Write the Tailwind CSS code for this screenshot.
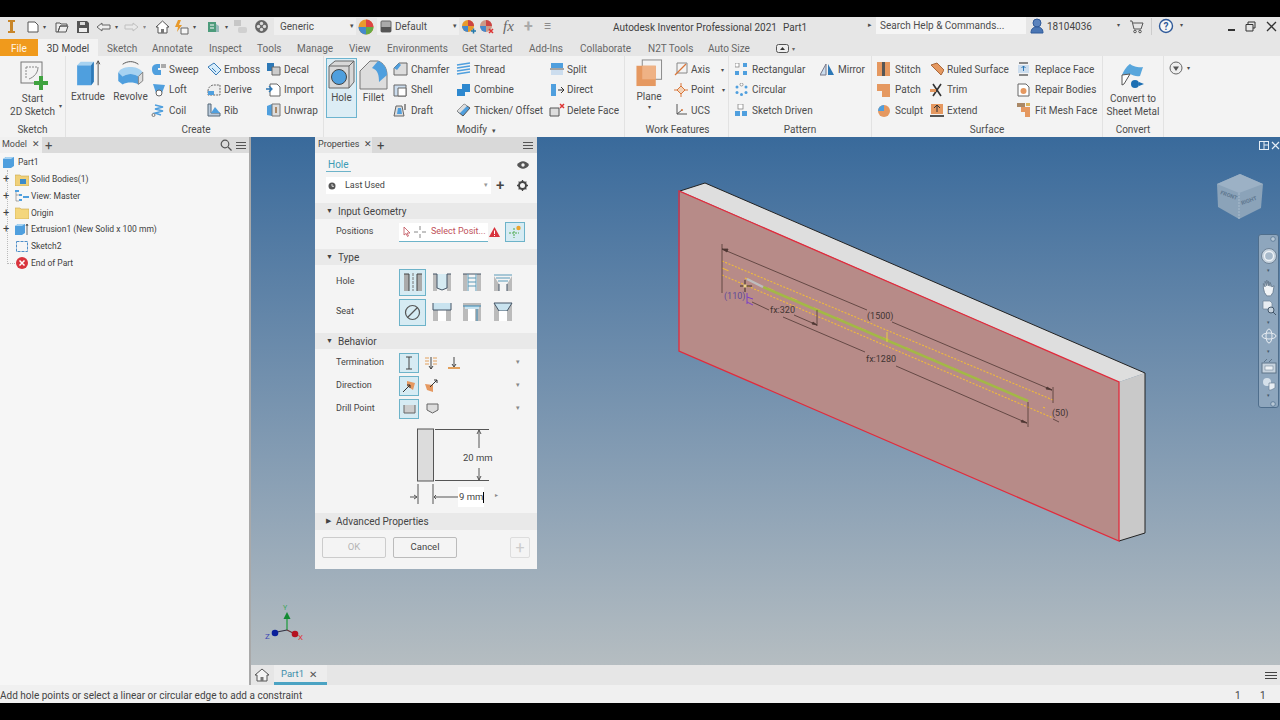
<!DOCTYPE html>
<html lang="en">
<head>
<meta charset="UTF-8">
<title>Autodesk Inventor Professional 2021</title>
<script src="https://cdn.jsdelivr.net/npm/@tailwindcss/browser@4"></script>
</head>
<body class="bg-black">
<div class="w-[1280px] h-[720px] overflow-hidden flex flex-col bg-black font-['Roboto',sans-serif] text-[10px] text-[#4d4d4d]">
  <div class="h-[17px] shrink-0 bg-black"></div>

  <!-- title bar -->
  <div class="h-[22px] shrink-0 bg-[#e6e6e6] flex items-center relative pb-[3px]">
    <div class="w-[26px] pl-[7px]"><svg width="9" height="15" viewBox="0 0 9 15"><path d="M1 1h7v2H6v9h2v2H1v-2h2V3H1z" fill="#c8862a"/></svg></div>
    <svg class="w-[14px] h-[14px]" viewBox="0 0 14 14"><path d="M2 2h7l3 3v7H2z" fill="#fff" stroke="#555"/></svg>
    <span class="w-[11px] text-[6px] pl-[3px]">▾</span>
    <svg class="w-[16px] h-[14px] ml-[3px]" viewBox="0 0 16 14"><path d="M2 3h4l1 1h6v2H6L4 12H2zM4 12l2-6h8l-2 6z" fill="#eee" stroke="#555"/></svg>
    <svg class="w-[14px] h-[14px] ml-[6px]" viewBox="0 0 14 14"><path d="M1 1h10l2 2v10H1z" fill="#555"/><path d="M4 2h5v3H4z" fill="#ddd"/><path d="M3 8h8v4H3z" fill="#eee"/></svg>
    <svg class="w-[15px] h-[12px] ml-[6px]" viewBox="0 0 15 12"><path d="M1 6l5-4v2h8v4H6v2z" fill="#eee" stroke="#666"/></svg>
    <span class="w-[10px] text-[6px] pl-[4px]">▾</span>
    <svg class="w-[15px] h-[12px] ml-[3px] opacity-40" viewBox="0 0 15 12"><path d="M14 6L9 2v2H1v4h8v2z" fill="#eee" stroke="#888"/></svg>
    <span class="w-[10px] text-[6px] pl-[4px] opacity-60">▾</span>
    <svg class="w-[15px] h-[15px] ml-[6px]" viewBox="0 0 15 15"><path d="M1 8l6.500-6L14 8h-2v6H3V8z" fill="#fff" stroke="#555"/><path d="M6 10h3v4H6z" fill="#777"/></svg>
    <svg class="w-[16px] h-[16px] ml-[3px]" viewBox="0 0 16 16"><path d="M5 1L2 8h3l-1 5 5-7H6l2-5z" fill="#e89a2c"/><path d="M8 9h7v6H8z" fill="#f6f6f6" stroke="#666"/></svg>
    <span class="w-[10px] text-[6px] pl-[4px]">▾</span>
    <svg class="w-[15px] h-[15px] ml-[7px]" viewBox="0 0 15 15"><path d="M2 3h8v10H2z" fill="#4d9c7c"/><path d="M10 5l3 2v6h-3z" fill="#9bb"/><path d="M4 6h4M4 9h4" stroke="#fff"/></svg>
    <span class="w-[10px] text-[6px] pl-[4px]">▾</span>
    <svg class="w-[15px] h-[15px] ml-[2px] opacity-50" viewBox="0 0 15 15"><rect x="1" y="1" width="7" height="6" fill="#aaa"/><rect x="5" y="8" width="9" height="6" rx="2" fill="#bbb"/></svg>
    <svg class="w-[15px] h-[15px] ml-[6px]" viewBox="0 0 15 15"><circle cx="7.500" cy="7.500" r="6.500" fill="#666"/><circle cx="7.500" cy="4.500" r="1.700" fill="#ddd"/><circle cx="7.500" cy="10.500" r="1.700" fill="#ddd"/><circle cx="4.500" cy="7.500" r="1.700" fill="#ddd"/><circle cx="10.500" cy="7.500" r="1.700" fill="#ddd"/></svg>
    <div class="w-[82px] h-[17px] ml-[5px] bg-[#efefef] flex items-center justify-between pl-[6px] pr-[2px]"><span>Generic</span><span class="text-[7px]">▾</span></div>
    <svg class="w-[16px] h-[16px] ml-[2px]" viewBox="0 0 16 16"><circle cx="8" cy="8" r="7.500" fill="#e89a2c"/><path d="M8 8V.5A7.500 7.500 0 0 1 15.500 8z" fill="#d44"/><path d="M8 8h7.500A7.500 7.500 0 0 1 8 15.500z" fill="#6a4"/><path d="M8 8v7.500A7.500 7.500 0 0 1 .5 8z" fill="#48c"/></svg>
    <div class="w-[82px] h-[17px] ml-[3px] bg-[#efefef] flex items-center justify-between pl-[3px] pr-[2px]"><span class="flex items-center gap-[3px]"><svg width="12" height="13" viewBox="0 0 12 13"><rect x="1" y="1" width="10" height="11" rx="1" fill="#aaa" stroke="#666"/><rect x="1" y="7" width="10" height="5" fill="#555"/></svg>Default</span><span class="text-[7px]">▾</span></div>
    <svg class="w-[15px] h-[15px] ml-[2px]" viewBox="0 0 15 15"><circle cx="7" cy="7" r="6" fill="#e89a2c"/><path d="M7 7V1a6 6 0 0 1 6 6z" fill="#c44"/><path d="M7 7v6a6 6 0 0 1-6-6z" fill="#48c"/><path d="M10 12h5M12.500 9.500v5" stroke="#27a" stroke-width="1.500"/></svg>
    <svg class="w-[15px] h-[15px] ml-[3px]" viewBox="0 0 15 15"><circle cx="7" cy="7" r="6" fill="#c98"/><path d="M7 7V1a6 6 0 0 1 6 6z" fill="#c44"/><path d="M7 7v6a6 6 0 0 1-6-6z" fill="#48c"/><path d="M10 10l4 4M14 10l-4 4" stroke="#d33" stroke-width="1.500"/></svg>
    <span class="ml-[9px] w-[17px] font-['Liberation_Serif',serif] italic text-[15px] text-[#666] leading-none">fx</span>
    <span class="ml-[4px] w-[14px] text-[#aaa] text-[16px] font-bold leading-none">+</span>
    <span class="ml-[6px] text-[8px] text-[#777]">☰</span>
    <span class="absolute left-[613px] top-[3px] text-[#3f3f3f]">Autodesk Inventor Professional 2021</span>
    <span class="absolute left-[783px] top-[3px] text-[#3f3f3f]">Part1</span>
    <span class="absolute left-[868px] top-[3px] text-[7px]">▸</span>
    <div class="absolute left-[876px] top-0 w-[150px] h-[17px] bg-[#f5f5f5] flex items-center pl-[4px]">Search Help &amp; Commands...</div>
    <svg class="absolute left-[1030px] top-[1px]" width="14" height="16" viewBox="0 0 14 16"><circle cx="7" cy="5" r="4" fill="#5b83bd" stroke="#2f5a9a"/><path d="M1 15c0-5 3-6 6-6s6 1 6 6z" fill="#4a76b4" stroke="#2f5a9a"/></svg>
    <span class="absolute left-[1047px] top-[2px] text-[#444]">18104036</span>
    <span class="absolute left-[1117px] top-[3px] text-[6px]">▾</span>
    <svg class="absolute left-[1129px] top-[2px]" width="15" height="15" viewBox="0 0 15 15" fill="none" stroke="#555"><path d="M1 2h2l2 8h7l2-6H4"/><circle cx="6" cy="12.500" r="1.300"/><circle cx="11" cy="12.500" r="1.300"/></svg>
    <div class="absolute left-[1151px] top-[1px] w-[1px] h-[17px] bg-[#ccc]"></div>
    <svg class="absolute left-[1158px] top-[1px]" width="16" height="16" viewBox="0 0 16 16"><circle cx="8" cy="8" r="6.500" fill="#f6f6f6" stroke="#2f5a9a" stroke-width="1.400"/><text x="8" y="11.500" text-anchor="middle" font-size="10" font-weight="700" fill="#2f5a9a" font-family="Roboto">?</text></svg>
    <span class="absolute left-[1180px] top-[3px] text-[6px]">▾</span>
    <div class="absolute left-[1228px] top-[12px] w-[7px] h-[2px] bg-[#333]"></div>
    <svg class="absolute left-[1245px] top-[4px]" width="11" height="11" viewBox="0 0 11 11" fill="none" stroke="#333"><path d="M3 3V1h7v6H8"/><path d="M1 3.500h7v6.500H1z"/></svg>
    <svg class="absolute left-[1266px] top-[4px]" width="11" height="11" viewBox="0 0 11 11" stroke="#333" stroke-width="1.300"><path d="M1 1l9 9M10 1l-9 9"/></svg>
  </div>

  <!-- ribbon tabs -->
  <div class="h-[17px] shrink-0 bg-[#e6e6e6] flex items-center text-[#666]">
    <div class="w-[38px] h-full bg-[#f09a1c] text-white/90 pl-[11px] pt-[2px] flex items-center">File</div>
    <div class="w-[60px] h-full bg-[#f3f3f3] text-[#444] pt-[2px] flex items-center justify-center">3D Model</div>
    <div class="h-full flex items-center pt-[2px]">
      <span class="ml-[9px] w-[45px]">Sketch</span>
      <span class="w-[57px]">Annotate</span>
      <span class="w-[48px]">Inspect</span>
      <span class="w-[40px]">Tools</span>
      <span class="w-[52px]">Manage</span>
      <span class="w-[38px]">View</span>
      <span class="w-[75px]">Environments</span>
      <span class="w-[67px]">Get Started</span>
      <span class="w-[51px]">Add-Ins</span>
      <span class="w-[68px]">Collaborate</span>
      <span class="w-[60px]">N2T Tools</span>
      <span class="w-[68px]">Auto Size</span>
      <svg width="13" height="9" viewBox="0 0 13 9"><rect x=".5" y=".5" width="12" height="8" rx="2" fill="#eee" stroke="#555"/><path d="M4 6l2.500-3L9 6z" fill="#333"/></svg>
      <span class="ml-[3px] text-[6px]">▾</span>
    </div>
  </div>

  <!-- ribbon -->
  <div class="h-[81px] shrink-0 bg-[#f3f3f3] flex">
    <!-- Sketch -->
    <div class="w-[66px] flex flex-col border-r border-[#e2e2e2]">
      <div class="h-[66px] flex flex-col items-center pt-[3px] relative">
        <svg width="32" height="32" viewBox="0 0 32 32" class="ml-[2px]"><rect x="3" y="3" width="21" height="21" fill="#f3f3f3" stroke="#777"/><path d="M8 8v11M8 8h12" stroke="#888" stroke-dasharray="2 1"/><path d="M20 8c0 6-4 10-9 12" stroke="#888" fill="none"/><path d="M21 17h4v5h5v4h-5v5h-4v-5h-5v-4h5z" fill="#3fa33f"/></svg>
        <span class="leading-[13px] mt-[1px]">Start</span>
        <span class="leading-[13px]">2D Sketch</span>
        <span class="absolute right-[3px] top-[45px] text-[6px]">▾</span>
      </div>
      <div class="text-center pt-[1px]">Sketch</div>
    </div>
    <!-- Create -->
    <div class="w-[258px] flex flex-col border-r border-[#e2e2e2]">
      <div class="h-[66px] flex pt-[3px]">
        <div class="w-[44px] flex flex-col items-center">
          <svg width="27" height="28" viewBox="0 0 30 32"><path d="M2 7h16l3-4v23l-3 4H2z" fill="#4f9fde"/><path d="M2 7h16l3-4H6z" fill="#a6d2f1"/><path d="M18 7l3-4v23l-3 4z" fill="#2d78b6"/><path d="M26 30V3M24 6l2-4 2 4" stroke="#444" fill="none"/></svg>
          <span class="mt-[2px]">Extrude</span>
        </div>
        <div class="w-[41px] flex flex-col items-center">
          <svg width="27" height="28" viewBox="0 0 30 32"><path d="M1 15c3-5 9-6 14-6s10 1 14 6l-5 5c-5-4-13-4-18 0z" fill="#a6d2f1"/><path d="M1 15l5 5v9l-5-4zM6 20c5-4 13-4 18 0v9c-5-3-13-3-18 0z" fill="#4f9fde"/><path d="M24 20l5-5v10l-5 4z" fill="#ddd" stroke="#777"/><path d="M6 6c6-4 12-4 18 0" stroke="#444" fill="none"/></svg>
          <span class="mt-[2px]">Revolve</span>
        </div>
        <div class="w-[55px] flex flex-col gap-[6.500px] pt-[3px]">
          <div class="flex items-center gap-[2px] h-[14px]"><svg width="16" height="14" viewBox="0 0 16 14"><path d="M1 7c0-4 3-5 6-5h2v4H7v2h3v5H5C3 13 1 11 1 7z" fill="#4f9fde"/><path d="M10 2h5v4h-5z" fill="#aaa"/></svg>Sweep</div>
          <div class="flex items-center gap-[2px] h-[14px]"><svg width="16" height="14" viewBox="0 0 16 14"><path d="M2 1l12 1-3 8a4 4 0 0 1-6 0z" fill="#4f9fde"/><circle cx="8" cy="10" r="3" fill="#fff" stroke="#666"/></svg>Loft</div>
          <div class="flex items-center gap-[2px] h-[14px]"><svg width="16" height="14" viewBox="0 0 16 14" fill="none" stroke="#4f9fde" stroke-width="1.500"><path d="M4 2l8 2-8 2 8 2-8 2 6 2"/><circle cx="2.500" cy="12" r="1.500" stroke="#777" stroke-width="1"/></svg>Coil</div>
        </div>
        <div class="w-[60px] flex flex-col gap-[6.500px] pt-[3px]">
          <div class="flex items-center gap-[2px] h-[14px]"><svg width="16" height="14" viewBox="0 0 16 14"><path d="M2 5l6-4 7 7-5 5z" fill="#d6ecfa" stroke="#3a7cb8"/><path d="M6 6l4 4" stroke="#3a7cb8"/></svg>Emboss</div>
          <div class="flex items-center gap-[2px] h-[14px]"><svg width="16" height="14" viewBox="0 0 16 14"><path d="M2 8a6 6 0 0 1 6-6h6v10H2z" fill="#eee" stroke="#666" stroke-dasharray="2 1"/><path d="M2 8h6v4H2z" fill="#4f9fde"/></svg>Derive</div>
          <div class="flex items-center gap-[2px] h-[14px]"><svg width="16" height="14" viewBox="0 0 16 14"><path d="M2 1h3v9h9v3H2z" fill="#bcd" stroke="#567"/><path d="M5 10l4-6 5 6z" fill="#4f9fde"/></svg>Rib</div>
        </div>
        <div class="flex flex-col gap-[6.500px] pt-[3px]">
          <div class="flex items-center gap-[3px] h-[14px]"><svg width="15" height="14" viewBox="0 0 15 14"><path d="M1 1h7v8H1z" fill="#2d78b6"/><path d="M6 5h8v8H6z" fill="#ccc" stroke="#666"/></svg>Decal</div>
          <div class="flex items-center gap-[3px] h-[14px]"><svg width="15" height="14" viewBox="0 0 15 14"><path d="M4 1h7l3 3v9H4z" fill="#fff" stroke="#666"/><path d="M0 6h5M3 3l3 3-3 3" stroke="#2d78b6" fill="none" stroke-width="1.300"/></svg>Import</div>
          <div class="flex items-center gap-[3px] h-[14px]"><svg width="15" height="14" viewBox="0 0 15 14"><path d="M1 3l5-2v12l-5-1z" fill="#4f9fde"/><path d="M6 1h8v12H6z" fill="#ddd" stroke="#777"/><path d="M9 4h2v6H9z" fill="#a86"/></svg>Unwrap</div>
        </div>
      </div>
      <div class="text-center pl-[3px] pt-[1px]">Create</div>
    </div>
    <!-- Modify -->
    <div class="w-[301px] flex flex-col border-r border-[#e2e2e2]">
      <div class="h-[66px] flex pt-[2px] pl-[2px]">
        <div class="w-[31px] h-[60px] border border-[#6cb4cf] bg-[#dcedf5] flex flex-col items-center pt-[1px]">
          <svg width="27" height="30" viewBox="0 0 27 30"><path d="M1 6l6-5h19v21l-5 6H1z" fill="#d8d8d8" stroke="#666"/><path d="M1 6h20v22M21 6l5-5" fill="none" stroke="#666"/><circle cx="11" cy="17" r="7.500" fill="#4f9fde" stroke="#444"/></svg>
          <span>Hole</span>
        </div>
        <div class="w-[33px] flex flex-col items-center pt-[2px]">
          <svg width="29" height="30" viewBox="0 0 29 30"><path d="M1 11L11 1h8c6 2 9 8 9 14v14H1z" fill="#ddd" stroke="#777"/><path d="M19 1c6 2 9 8 9 14l-8 7c0-7-1-12-7-14z" fill="#4f9fde"/></svg>
          <span>Fillet</span>
        </div>
        <div class="w-[66px] pl-[3px] flex flex-col gap-[6.500px] pt-[4px]">
          <div class="flex items-center gap-[3px] h-[14px]"><svg width="15" height="14" viewBox="0 0 15 14"><path d="M1 6l5-5h8v12H1z" fill="#ddd" stroke="#666"/><path d="M1 6l5-5 2 2-4 5z" fill="#4f9fde"/></svg>Chamfer</div>
          <div class="flex items-center gap-[3px] h-[14px]"><svg width="15" height="14" viewBox="0 0 15 14"><path d="M1 2h12v11H1z" fill="#cde" stroke="#666"/><path d="M5 5h8v8H5z" fill="#fff" stroke="#666"/></svg>Shell</div>
          <div class="flex items-center gap-[3px] h-[14px]"><svg width="15" height="14" viewBox="0 0 15 14"><path d="M3 3h6l2 10H1z" fill="#ddd" stroke="#666"/><path d="M5 5h3l1 6H4z" fill="#4f9fde"/><path d="M12 1v6" stroke="#333"/></svg>Draft</div>
        </div>
        <div class="w-[93px] flex flex-col gap-[6.500px] pt-[4px]">
          <div class="flex items-center gap-[3px] h-[14px]"><svg width="15" height="14" viewBox="0 0 15 14" fill="none" stroke="#4f9fde" stroke-width="1.300"><path d="M1 3l13-2M1 6l13-2M1 9l13-2M1 12l13-2"/></svg>Thread</div>
          <div class="flex items-center gap-[3px] h-[14px]"><svg width="15" height="14" viewBox="0 0 15 14"><path d="M6 1h8v8H9v4H1V6h5z" fill="#2d88cf"/></svg>Combine</div>
          <div class="flex items-center gap-[3px] h-[14px]"><svg width="15" height="14" viewBox="0 0 15 14"><path d="M1 8l7-7 6 4-7 8z" fill="#4f9fde" stroke="#555"/><path d="M1 8l7-7 3 2-7 7z" fill="#ddd"/></svg>Thicken/ Offset</div>
        </div>
        <div class="flex flex-col gap-[6.500px] pt-[4px]">
          <div class="flex items-center gap-[2px] h-[14px]"><svg width="16" height="14" viewBox="0 0 16 14"><path d="M2 1h12v5H2z" fill="#4f9fde"/><path d="M1 7h14" stroke="#555"/><path d="M2 8h12v5H2z" fill="#cde"/></svg>Split</div>
          <div class="flex items-center gap-[2px] h-[14px]"><svg width="16" height="14" viewBox="0 0 16 14"><path d="M2 1h5v12H2z" fill="#4f9fde"/><path d="M9 7h6M12 4l3 3-3 3" stroke="#333" fill="none"/></svg>Direct</div>
          <div class="flex items-center gap-[2px] h-[14px]"><svg width="16" height="14" viewBox="0 0 16 14"><path d="M1 5h9v8H1z" fill="#ddd" stroke="#555"/><path d="M11 1l4 4M15 1l-4 4" stroke="#d33" stroke-width="1.500"/></svg>Delete Face</div>
        </div>
      </div>
      <div class="text-center pl-[4px] pt-[1px]">Modify <span class="text-[7px] ml-[2px]">▾</span></div>
    </div>
    <!-- Work Features -->
    <div class="w-[104px] flex flex-col border-r border-[#e2e2e2]">
      <div class="h-[66px] flex pt-[3px]">
        <div class="w-[49px] flex flex-col items-center pr-[1px]">
          <svg width="28" height="28" viewBox="0 0 28 29"><rect x="7" y="1" width="20" height="20" fill="#f3f3f3" stroke="#888"/><rect x="1" y="7" width="20" height="21" fill="#e59860"/><rect x="7" y="7" width="14" height="14" fill="#efb285"/></svg>
          <span class="mt-[2px]">Plane</span>
          <span class="text-[6px] leading-none">▾</span>
        </div>
        <div class="flex flex-col gap-[6.500px] pt-[3px]">
          <div class="flex items-center gap-[3px] h-[14px]"><svg width="14" height="14" viewBox="0 0 14 14" fill="none"><path d="M3 1h10v10H3z" stroke="#888"/><path d="M1 13L12 2" stroke="#d9763a" stroke-width="1.300"/></svg>Axis<span class="text-[6px] ml-[8px]">▾</span></div>
          <div class="flex items-center gap-[3px] h-[14px]"><svg width="14" height="14" viewBox="0 0 14 14"><path d="M7 0v14M0 7h14" stroke="#d9763a"/><path d="M7 3l4 4-4 4-4-4z" fill="#f3d3b8" stroke="#d9763a"/></svg>Point<span class="text-[6px] ml-[5px]">▾</span></div>
          <div class="flex items-center gap-[3px] h-[14px]"><svg width="14" height="14" viewBox="0 0 14 14" fill="none" stroke="#555"><path d="M3 1v10h10M3 11l5-4"/><circle cx="8" cy="7" r="1" fill="#d9763a" stroke="none"/></svg>UCS</div>
        </div>
      </div>
      <div class="text-center pl-[2px] pt-[1px]">Work Features</div>
    </div>
    <!-- Pattern -->
    <div class="w-[143px] flex flex-col border-r border-[#e2e2e2]">
      <div class="h-[66px] flex pt-[6px] pl-[6px]">
        <div class="w-[85px] flex flex-col gap-[6.500px]">
          <div class="flex items-center gap-[4px] h-[14px]"><svg width="13" height="13" viewBox="0 0 13 13"><rect x="0" y="0" width="4" height="4" fill="#fff" stroke="#777" stroke-width=".7"/><rect x="8" y="0" width="4" height="4" fill="#4f9fde"/><rect x="0" y="8" width="4" height="4" fill="#4f9fde"/><rect x="8" y="8" width="4" height="4" fill="#4f9fde"/></svg>Rectangular</div>
          <div class="flex items-center gap-[4px] h-[14px]"><svg width="13" height="13" viewBox="0 0 13 13" fill="#4f9fde"><circle cx="6.500" cy="1.500" r="1.500" fill="#fff" stroke="#777" stroke-width=".7"/><circle cx="11" cy="4" r="1.500"/><circle cx="11" cy="9.500" r="1.500"/><circle cx="6.500" cy="11.500" r="1.500"/><circle cx="2" cy="9.500" r="1.500"/><circle cx="2" cy="4" r="1.500"/></svg>Circular</div>
          <div class="flex items-center gap-[4px] h-[14px]"><svg width="13" height="13" viewBox="0 0 13 13"><rect x="3" y="0" width="5" height="5" fill="#fff" stroke="#777" stroke-width=".7"/><rect x="0" y="7" width="5" height="5" fill="#4f9fde"/><rect x="7" y="7" width="5" height="5" fill="#4f9fde"/></svg>Sketch Driven</div>
        </div>
        <div class="flex items-center gap-[4px] h-[14px]"><svg width="14" height="13" viewBox="0 0 14 13"><path d="M6 1v11H0z" fill="#cde" stroke="#778"/><path d="M8 1v11h6z" fill="#2d78b6"/></svg>Mirror</div>
      </div>
      <div class="text-center pt-[1px]">Pattern</div>
    </div>
    <!-- Surface -->
    <div class="w-[231px] flex flex-col border-r border-[#e2e2e2]">
      <div class="h-[66px] flex pt-[6px] pl-[5px]">
        <div class="w-[53px] flex flex-col gap-[6.500px]">
          <div class="flex items-center gap-[5px] h-[14px]"><svg width="13" height="14" viewBox="0 0 13 14"><path d="M0 0h13v14H0z" fill="#e59860"/><path d="M5 0h3v14H5z" fill="#555"/></svg>Stitch</div>
          <div class="flex items-center gap-[5px] h-[14px]"><svg width="13" height="14" viewBox="0 0 13 14"><path d="M0 1h13v13H5V8H0z" fill="#e59860"/></svg>Patch</div>
          <div class="flex items-center gap-[5px] h-[14px]"><svg width="13" height="14" viewBox="0 0 13 14"><circle cx="7" cy="8" r="6" fill="#e59860"/><path d="M7 8V2a6 6 0 0 0-6 6z" fill="#4f9fde"/></svg>Sculpt</div>
        </div>
        <div class="w-[87px] flex flex-col gap-[6.500px]">
          <div class="flex items-center gap-[3px] h-[14px]"><svg width="14" height="14" viewBox="0 0 14 14"><path d="M1 3l6-2 7 7-3 5z" fill="#e59860" stroke="#a9683c"/></svg>Ruled Surface</div>
          <div class="flex items-center gap-[3px] h-[14px]"><svg width="14" height="14" viewBox="0 0 14 14"><path d="M3 1l8 12M11 1L3 13" stroke="#333" stroke-width="1.600"/><path d="M0 6h6v3H0z" fill="#e59860"/></svg>Trim</div>
          <div class="flex items-center gap-[3px] h-[14px]"><svg width="14" height="14" viewBox="0 0 14 14"><path d="M1 1h12v10H1z" fill="#e59860"/><path d="M7 9V3M4 5l3-3 3 3" stroke="#333" fill="none"/><path d="M0 12h14v2H0z" fill="#555"/></svg>Extend</div>
        </div>
        <div class="flex flex-col gap-[6.500px]">
          <div class="flex items-center gap-[5px] h-[14px]"><svg width="13" height="14" viewBox="0 0 13 14"><path d="M2 0h9v2H2zM2 12h9v2H2z" fill="#888"/><path d="M1 3h11v8H1z" fill="#cde"/><path d="M6.500 9V4M4.500 6l2-2 2 2" stroke="#2d78b6" fill="none"/></svg>Replace Face</div>
          <div class="flex items-center gap-[5px] h-[14px]"><svg width="13" height="14" viewBox="0 0 13 14"><path d="M1 1h8l3 3v9H1z" fill="#fff" stroke="#666"/><circle cx="6.500" cy="8" r="3" fill="#e59860"/></svg>Repair Bodies</div>
          <div class="flex items-center gap-[5px] h-[14px]"><svg width="13" height="14" viewBox="0 0 13 14"><path d="M0 0h8v4H0z" fill="#a86"/><path d="M4 4h9v10H8V9H4z" fill="#e59860"/><path d="M9 0h4v3H9z" fill="#ddb45c"/></svg>Fit Mesh Face</div>
        </div>
      </div>
      <div class="text-center pt-[1px]">Surface</div>
    </div>
    <!-- Convert -->
    <div class="w-[61px] flex flex-col border-r border-[#e2e2e2]">
      <div class="h-[66px] flex flex-col items-center pt-[5px]">
        <svg width="30" height="30" viewBox="0 0 30 30"><path d="M4 14c2-5 6-10 8-11 2 2 9 4 13 3l-3 9c-4 1-7-1-10-2z" fill="#58a6dc"/><path d="M4 14l8-1-6 10-2 1z" fill="#fff" stroke="#555"/><circle cx="17" cy="23" r="4" fill="#1c6fb3"/><path d="M21 21l5 2-5 2z" fill="#1c6fb3"/></svg>
        <span class="leading-[13px] mt-[1px] whitespace-nowrap">Convert to</span>
        <span class="leading-[13px] whitespace-nowrap">Sheet Metal</span>
      </div>
      <div class="text-center pt-[1px]">Convert</div>
    </div>
    <div class="pl-[5px] pt-[5px] flex items-start gap-[4px]">
      <svg width="14" height="14" viewBox="0 0 14 14"><circle cx="7" cy="7" r="6" fill="#eee" stroke="#666"/><path d="M4 5.500h6L7 10z" fill="#555"/></svg>
      <span class="text-[6px] leading-[14px]">▾</span>
    </div>
  </div>

  <!-- main area -->
  <div class="flex-1 min-h-0 flex">
    <!-- model browser -->
    <div class="w-[249px] shrink-0 bg-[#f6f6f6] flex flex-col">
      <div class="h-[16px] bg-[#dbdbdb] flex items-center">
        <div class="w-[42px] h-full bg-[#f0f0f0] flex items-center pl-[2px] gap-[5px] text-[9px]">Model<span class="text-[9px]">✕</span></div>
        <span class="ml-[3px] text-[13px] leading-none">+</span>
        <svg class="ml-auto" width="12" height="12" viewBox="0 0 12 12" fill="none" stroke="#555" stroke-width="1.200"><circle cx="5" cy="5" r="3.800"/><path d="M8 8l3.500 3.500"/></svg>
        <div class="w-[10px] mx-[3px] ml-[4px] flex flex-col gap-[2px]"><div class="h-[1px] bg-[#555]"></div><div class="h-[1px] bg-[#555]"></div><div class="h-[1px] bg-[#555]"></div></div>
      </div>
      <div class="flex flex-col pt-[1.500px] text-[#3f3f3f] text-[8.500px] relative">
        <div class="absolute left-[7px] top-[17px] h-[94px] w-[8px] border-l border-b border-dotted border-[#bbb]"></div>
        <div class="h-[16.700px] flex items-center pl-[2px] gap-[3px]"><svg width="13" height="13" viewBox="0 0 13 13"><path d="M1 3l3-2h8v9l-3 2H1z" fill="#4f9fde"/><path d="M1 3l3-2h8L9 3z" fill="#a6d2f1"/></svg>Part1</div>
        <div class="h-[16.700px] flex items-center pl-[3px] relative"><span class="w-[12px] text-[11px]">+</span><svg class="mr-[2px]" width="14" height="12" viewBox="0 0 14 12"><path d="M0 1h5l1 1h8v10H0z" fill="#efd07a" stroke="#c9a84e" stroke-width=".6"/><rect x="5" y="5" width="6" height="5" fill="#3c8bc9"/></svg>Solid Bodies(1)</div>
        <div class="h-[16.700px] flex items-center pl-[3px] relative"><span class="w-[12px] text-[11px]">+</span><svg class="mr-[2px]" width="14" height="12" viewBox="0 0 14 12" fill="#4f9fde"><rect x="0" y="0" width="4" height="2"/><rect x="4" y="4" width="3" height="2"/><rect x="8" y="6" width="6" height="2"/><rect x="4" y="9" width="3" height="2"/><path d="M1 2v9h3M1 5h3" stroke="#777" fill="none" stroke-width=".6"/></svg>View: Master</div>
        <div class="h-[16.700px] flex items-center pl-[3px] relative"><span class="w-[12px] text-[11px]">+</span><svg class="mr-[2px]" width="14" height="12" viewBox="0 0 14 12"><path d="M0 1h5l1 1h8v10H0z" fill="#f4d67c" stroke="#c9a84e" stroke-width=".6"/></svg>Origin</div>
        <div class="h-[16.700px] flex items-center pl-[3px] relative"><span class="w-[12px] text-[11px]">+</span><svg class="mr-[2px]" width="14" height="13" viewBox="0 0 14 13"><path d="M0 3l3-2h7v9l-3 2H0z" fill="#4f9fde"/><path d="M0 3l3-2h7L7 3z" fill="#a6d2f1"/><path d="M12 12V1M11 3l1-2 1 2" stroke="#444" fill="none" stroke-width=".8"/></svg>Extrusion1 (New Solid x 100 mm)</div>
        <div class="h-[16.700px] flex items-center pl-[15px] relative"><svg class="mr-[2px]" width="14" height="13" viewBox="0 0 14 13"><rect x="1.500" y="1.500" width="11" height="10" fill="none" stroke="#4f8fc9" stroke-dasharray="3 1"/></svg>Sketch2</div>
        <div class="h-[16.700px] flex items-center pl-[15px] relative"><svg class="mr-[2px]" width="14" height="14" viewBox="0 0 14 14"><circle cx="7" cy="7" r="6" fill="#d9343d"/><path d="M4.500 4.500l5 5M9.500 4.500l-5 5" stroke="#fff" stroke-width="1.500"/></svg>End of Part</div>
      </div>
    </div>
    <div class="w-[2px] shrink-0 bg-[#a9a9a9]"></div>

    <!-- graphics window -->
    <div class="flex-1 min-w-0 flex flex-col relative">
      <div class="flex-1 min-h-0 relative bg-linear-to-b from-[#396a9b] to-[#b5bdc1] overflow-hidden">
        <svg class="absolute left-0 top-0" width="1029" height="528" viewBox="251 137 1029 528" font-family="Roboto" font-size="9" fill="none">
          <path d="M680 191L705 183 1145 373 1119 382z" fill="#dedede"/>
          <path d="M1119 382L1145 373V533L1119 541z" fill="#c9c9c9"/>
          <path d="M680 191L1119 382V541L679 351z" fill="#b78b88"/>
          <path d="M680 191L705 183 1145 373V533L1119 541" stroke="#222" stroke-width="1"/>
          <path d="M679 351V191L1119 382V541z" stroke="#e22b3c" stroke-width="1.300"/>
          <path d="M722 261L1053 400M722 275L1053 418" stroke="#f0ba3a" stroke-width="1.100" stroke-dasharray="2 1.500"/>
          <path d="M722 268L1045 408" stroke="#f0ba3a" stroke-width="1.100" stroke-dasharray="7 18"/>
          <path d="M763 287L1028 401" stroke="#a3b846" stroke-width="2.500"/>
          <path d="M747 279L763 287" stroke="#bdbdbd" stroke-width="2.500"/>
          <path d="M887 332V342" stroke="#e8cc40"/>
          <g stroke="#4f3734" stroke-width=".8">
            <path d="M722 249L867 310M892 322L1052 390M722 244V293M1053 387V403"/>
            <path d="M752 302L769 310M794 315L817 325M817 310V326"/>
            <path d="M783 317L865 352M896 366L1027 423M1028 402V427"/>
            <path d="M722 249l6 0-1 3zM1052 390l-6-1 1-2zM817 325l-5-1 1-2zM1027 423l-6-1 1-2z" fill="#4f3734"/>
            <path d="M1053 419l6 3"/>
          </g>
          <path d="M747 293V304M747 297l6 2M747 302l6 3" stroke="#7b3fc8" stroke-width="1"/>
          <path d="M740 286H752M745 280V292" stroke="#3b2a20" stroke-width="1"/>
          <rect x="743.500" y="284.500" width="3" height="3" fill="#f0d48a"/>
          <text x="724" y="299" fill="#5f4a9a" stroke="none">(110)</text>
          <text x="770" y="313" fill="#3f3432" stroke="none">fx:320</text>
          <text x="867" y="319" fill="#3f3432" stroke="none">(1500)</text>
          <text x="866" y="362" fill="#3f3432" stroke="none">fx:1280</text>
          <text x="1052" y="416" fill="#3f3432" stroke="none">(50)</text>
          <!-- view cube -->
          <path d="M1217 184L1240 174 1263 184 1261 208 1239 219 1218 207z" fill="#8ba3b9"/>
          <path d="M1217 184L1239 193 1263 184 1240 174z" fill="#9cb1c5"/>
          <path d="M1239 193V219" stroke="#a9bccd" stroke-dasharray="2 1"/>
          <text x="1220" y="194" fill="#5f7890" stroke="none" font-size="5.500" transform="rotate(20 1220 194)" font-weight="700">FRONT</text>
          <text x="1242" y="205" fill="#5f7890" stroke="none" font-size="5.500" transform="rotate(-20 1242 205)" font-weight="700">RIGHT</text>
          <!-- triad -->
          <path d="M287 630V617" stroke="#1a9a3a" stroke-width="1.200"/>
          <path d="M287 612l3.500 7h-7z" fill="#138a33"/>
          <text x="283" y="610" fill="#3fa75a" stroke="none" font-size="7">Y</text>
          <path d="M287 630L277 632" stroke="#334" stroke-width="1.200"/>
          <circle cx="275" cy="633" r="3.300" fill="#0a1f9a"/>
          <text x="265" y="639" fill="#3a45b5" stroke="none" font-size="8">Z</text>
          <path d="M287 630L293 633" stroke="#633" stroke-width="1.200"/>
          <circle cx="295" cy="634" r="3.300" fill="#b5121f"/>
          <text x="298" y="640" fill="#d33" stroke="none" font-size="8">X</text>
        </svg>

        <!-- window controls -->
        <svg class="absolute left-[1008px] top-[4px]" width="10" height="9" viewBox="0 0 10 9"><rect x=".5" y=".5" width="9" height="8" fill="none" stroke="#e4edf5"/><path d="M5 1v7M5 4h4" stroke="#e4edf5"/></svg>
        <svg class="absolute left-[1020px] top-[4px]" width="9" height="9" viewBox="0 0 9 9" stroke="#e4edf5" stroke-width="1.200"><path d="M1 1l7 7M8 1L1 8"/></svg>

        <!-- navigation bar -->
        <div class="absolute left-[1007px] top-[97px] w-[21px] h-[174px] rounded-[3px] border border-[#4f6e8c] bg-[#8ea6bd] flex flex-col items-center pt-[1px]">
          <svg class="ml-[8px]" width="6" height="6" viewBox="0 0 6 6"><circle cx="3" cy="3" r="2.300" fill="#b8c8d6" stroke="#4f6e8c" stroke-width=".7"/></svg>
          <svg class="mt-[5px]" width="18" height="18" viewBox="0 0 18 18"><circle cx="9" cy="9" r="7.500" fill="#c7d3de" stroke="#6f8397"/><circle cx="9" cy="9" r="4.500" fill="#a8bacb" stroke="#eef2f6" stroke-width="1.300"/></svg>
          <span class="h-[8px] mt-[1px] text-[5px] leading-[8px] text-[#45586b]">▾</span>
          <svg class="mt-[5px]" width="18" height="18" viewBox="0 0 16 16"><path d="M3 8V4l1.500 3V2l1.500 4V1l1.500 5V2L9 6.500V3l1.500 4 2-1-1 6-2 3H6l-2-3z" fill="#f1f4f7" stroke="#5f7489" stroke-width=".7"/></svg>
          <svg class="mt-[3px]" width="16" height="16" viewBox="0 0 16 16"><path d="M2 1h7l2 2v6H2z" fill="#e8edf2" stroke="#6f8397" stroke-width=".7"/><circle cx="10" cy="10" r="3" fill="#c7d3de" stroke="#45586b"/><path d="M12 12l3 3" stroke="#45586b"/></svg>
          <span class="h-[8px] mt-[2px] text-[5px] leading-[8px] text-[#45586b]">▾</span>
          <svg class="mt-[2px]" width="16" height="16" viewBox="0 0 16 16" fill="none" stroke="#e8edf2"><ellipse cx="8" cy="8" rx="7" ry="3"/><ellipse cx="8" cy="8" rx="3" ry="7"/></svg>
          <span class="h-[8px] mt-[3px] text-[5px] leading-[8px] text-[#45586b]">▾</span>
          <svg class="mt-[3px]" width="16" height="16" viewBox="0 0 16 16"><rect x="1" y="5" width="14" height="10" fill="#c7d3de" stroke="#5f7489"/><rect x="4" y="8" width="8" height="4" fill="#eef2f6" stroke="#5f7489" stroke-width=".5"/><path d="M3 4l3-3M8 4l3-3" stroke="#5f7489"/></svg>
          <svg class="mt-[3px]" width="14" height="14" viewBox="0 0 14 14"><circle cx="5" cy="5" r="4" fill="#d5e0ea"/><path d="M7 6h6v5l-4 2H7z" fill="#e8eef4" stroke="#6f8397" stroke-width=".7"/></svg>
          <span class="h-[8px] text-[5px] leading-[8px] text-[#45586b]">▾</span>
          <svg class="ml-[8px] mt-[2px]" width="6" height="6" viewBox="0 0 6 6"><circle cx="3" cy="3" r="2.300" fill="#b8c8d6" stroke="#4f6e8c" stroke-width=".7"/></svg>
        </div>

        <!-- properties panel -->
        <div class="absolute left-[64px] top-0 w-[222px] h-[432px] bg-[#f4f4f4] flex flex-col text-[#444] text-[9px]">
          <div class="h-[16px] shrink-0 bg-[#d9d9d9] flex items-center">
            <div class="w-[57px] h-full bg-[#e9e9e9] flex items-center pl-[3px] gap-[5px]">Properties<span class="text-[9px]">✕</span></div>
            <span class="ml-[5px] text-[13px] leading-none">+</span>
            <div class="w-[10px] ml-auto mr-[4px] flex flex-col gap-[2px]"><div class="h-[1px] bg-[#555]"></div><div class="h-[1px] bg-[#555]"></div><div class="h-[1px] bg-[#555]"></div></div>
          </div>
          <div class="h-[24px] shrink-0 flex items-center justify-between pl-[11px] pr-[8px]">
            <span class="text-[#3d9bb5] border-b border-[#6db3c9] px-[2px] text-[10px] leading-[13px]">Hole</span>
            <svg width="12" height="8" viewBox="0 0 12 8"><path d="M0 4c3-5 9-5 12 0-3 5-9 5-12 0z" fill="#555"/><circle cx="6" cy="4" r="1.700" fill="#f4f4f4"/></svg>
          </div>
          <div class="h-[17px] shrink-0 flex items-center pl-[11px]">
            <div class="w-[165px] h-full bg-white flex items-center pl-[2px] pr-[3px]">
              <svg width="8" height="8" viewBox="0 0 8 8"><circle cx="4" cy="4" r="3.500" fill="#555"/><path d="M4 2v2.300h2" stroke="#fff" fill="none" stroke-width=".8"/></svg>
              <span class="ml-[9px]">Last Used</span>
              <span class="ml-auto text-[7px] text-[#999]">▾</span>
            </div>
            <span class="ml-[5px] text-[15px] leading-none font-medium">+</span>
            <svg class="ml-[13px]" width="11" height="11" viewBox="0 0 11 11"><circle cx="5.500" cy="5.500" r="3.500" fill="none" stroke="#444" stroke-width="2"/><path d="M5.500 0v11M0 5.500h11M1.600 1.600l7.800 7.800M9.400 1.600l-7.800 7.800" stroke="#444" stroke-width="1.300" stroke-dasharray="1.500 8 1.500"/></svg>
          </div>
          <div class="h-[16px] shrink-0 mt-[9px] bg-[#e9e9e9] flex items-center pl-[11px] gap-[5px] text-[10px]"><span class="text-[7px]">▼</span>Input Geometry</div>
          <div class="h-[26px] shrink-0 flex items-center pl-[21px]">
            <span class="w-[63px]">Positions</span>
            <div class="w-[89px] h-[19px] bg-white border-b border-[#6db3c9] flex items-center pl-[4px] gap-[3px] text-[#c0505a] whitespace-nowrap overflow-hidden">
              <svg class="shrink-0" width="8" height="11" viewBox="0 0 8 11"><path d="M1 1l6 6H4l1.500 3-1 .5L3 7.500 1 9z" fill="#fff" stroke="#c0505a" stroke-width=".8"/></svg>
              <svg class="shrink-0" width="12" height="12" viewBox="0 0 12 12" stroke="#888"><path d="M6 0v4M6 8v4M0 6h4M8 6h4"/></svg>
              <span class="ml-[2px]">Select Posit...</span>
            </div>
            <svg class="ml-[1px]" width="11" height="10" viewBox="0 0 11 10"><path d="M5.500 0L11 10H0z" fill="#d8343e"/><path d="M5.500 3.500v3.500M5.500 8v1" stroke="#fff"/></svg>
            <div class="w-[20px] h-[20px] ml-[5px] bg-[#d6ebf3] border border-[#6db3c9] flex items-center justify-center">
              <svg width="14" height="14" viewBox="0 0 14 14"><path d="M6 3v10M1 8h10" stroke="#4aa84a" stroke-dasharray="2 1"/><circle cx="10.500" cy="3" r="2.200" fill="#eaa32d"/></svg>
            </div>
          </div>
          <div class="h-[16px] shrink-0 mt-[4px] bg-[#e9e9e9] flex items-center pl-[11px] gap-[5px] text-[10px]"><span class="text-[7px]">▼</span>Type</div>
          <div class="h-[30px] shrink-0 mt-[2px] flex items-center pl-[21px]">
            <span class="w-[63px]">Hole</span>
            <div class="w-[27px] h-[27px] bg-[#d6ebf3] border border-[#6db3c9] flex items-center justify-center">
              <svg width="20" height="20" viewBox="0 0 20 20"><path d="M1 2h5v17H1zM14 2h5v17h-5z" fill="#aaa"/><path d="M1 2h5M14 2h5M6 2v17M14 2v17" stroke="#444" fill="none"/><path d="M10 1v18" stroke="#777" stroke-dasharray="3 1"/></svg>
            </div>
            <svg class="ml-[6px]" width="20" height="20" viewBox="0 0 20 20"><path d="M1 2h4v17H1zM15 2h4v17h-4z" fill="#bbb"/><path d="M5 2v14l5 2 5-2V2" fill="#d6ebf3" stroke="#456"/><path d="M1 2h4M15 2h4" stroke="#456"/></svg>
            <svg class="ml-[10px]" width="20" height="20" viewBox="0 0 20 20"><path d="M1 2h4v17H1zM15 2h4v17h-4z" fill="#bbb"/><path d="M1 2h18" stroke="#456"/><path d="M6 2v17M14 2v17M6 6h8M6 10h8M6 14h8" stroke="#5a9ab8"/></svg>
            <svg class="ml-[11px]" width="20" height="20" viewBox="0 0 20 20"><path d="M1 4l5 8v7H1zM19 4l-5 8v7h5z" fill="#bbb"/><path d="M1 3h18M3 6h14M5 9h10" stroke="#5a9ab8"/><path d="M6 12v7M14 12v7" stroke="#456"/></svg>
          </div>
          <div class="h-[30px] shrink-0 flex items-center pl-[21px]">
            <span class="w-[63px]">Seat</span>
            <div class="w-[27px] h-[27px] bg-[#d6ebf3] border border-[#6db3c9] flex items-center justify-center">
              <svg width="17" height="17" viewBox="0 0 17 17" fill="none" stroke="#555" stroke-width="1.200"><circle cx="8.500" cy="8.500" r="7"/><path d="M3.500 13.500l10-10"/></svg>
            </div>
            <svg class="ml-[6px]" width="20" height="20" viewBox="0 0 20 20"><path d="M1 1h18v18H1z" fill="#bbb"/><path d="M1 1h18v7H1z" fill="#c9e3ef"/><path d="M6 8h8v11H6z" fill="#fff"/><path d="M1 1v7h18V1" fill="none" stroke="#456"/></svg>
            <svg class="ml-[10px]" width="20" height="20" viewBox="0 0 20 20"><path d="M1 1h18v18H1z" fill="#bbb"/><path d="M3 4h14v3H3z" fill="#c9e3ef"/><path d="M6 7h7v12H6z" fill="#fff"/><path d="M1 4h18M15 7v12" stroke="#3a8ab5"/></svg>
            <svg class="ml-[11px]" width="20" height="20" viewBox="0 0 20 20"><path d="M1 1h18v18H1z" fill="#bbb"/><path d="M1 1l5 8h8l5-8z" fill="#c9e3ef" stroke="#456"/><path d="M6 9h8v10H6z" fill="#fff"/></svg>
          </div>
          <div class="h-[16px] shrink-0 mt-[6px] bg-[#e9e9e9] flex items-center pl-[11px] gap-[5px] text-[10px]"><span class="text-[7px]">▼</span>Behavior</div>
          <div class="h-[23px] shrink-0 mt-[2px] flex items-center pl-[21px]">
            <span class="w-[63px]">Termination</span>
            <div class="w-[20px] h-[20px] bg-[#d6ebf3] border border-[#6db3c9] flex items-center justify-center"><svg width="10" height="14" viewBox="0 0 10 14" stroke="#444"><path d="M2 1h6M2 13h6M5 1v12"/></svg></div>
            <svg class="ml-[5px]" width="14" height="14" viewBox="0 0 14 14" stroke="#e2a05c"><path d="M1 2h4M1 5h4M1 8h4M9 2h4M9 5h4M9 8h4"/><path d="M7 1v12M5 10l2 3 2-3" stroke="#444" fill="none"/></svg>
            <svg class="ml-[9px]" width="14" height="14" viewBox="0 0 14 14"><path d="M7 1v9M5 8l2 3 2-3" stroke="#444" fill="none"/><path d="M1 12h12" stroke="#e2a05c" stroke-width="2"/></svg>
            <span class="ml-auto mr-[17px] text-[7px] text-[#888]">▾</span>
          </div>
          <div class="h-[23px] shrink-0 flex items-center pl-[21px]">
            <span class="w-[63px]">Direction</span>
            <div class="w-[20px] h-[20px] bg-[#d6ebf3] border border-[#6db3c9] flex items-center justify-center"><svg width="14" height="14" viewBox="0 0 14 14"><path d="M5 2l8 2-2 7-6-4z" fill="#e59860"/><path d="M1 13L8 6M8 9V6H5" stroke="#333" fill="none"/></svg></div>
            <svg class="ml-[5px]" width="14" height="14" viewBox="0 0 14 14"><path d="M1 5l8 1v7l-6-2z" fill="#e59860"/><path d="M6 8l7-7M10 1h3v3" stroke="#333" fill="none"/></svg>
            <span class="ml-auto mr-[17px] text-[7px] text-[#888]">▾</span>
          </div>
          <div class="h-[23px] shrink-0 flex items-center pl-[21px]">
            <span class="w-[63px]">Drill Point</span>
            <div class="w-[20px] h-[20px] bg-[#d6ebf3] border border-[#6db3c9] flex items-center justify-center"><svg width="13" height="10" viewBox="0 0 13 10"><path d="M1 1v8h11V1" fill="#ccc" stroke="#666"/></svg></div>
            <svg class="ml-[7px]" width="13" height="11" viewBox="0 0 13 11"><path d="M1 1h11v6l-5.500 3L1 7z" fill="#ddd" stroke="#666"/></svg>
            <span class="ml-auto mr-[17px] text-[7px] text-[#888]">▾</span>
          </div>
          <!-- hole diagram -->
          <div class="h-[90px] shrink-0 relative text-[9.500px]">
            <svg class="absolute left-[90px] top-[6px]" width="90" height="84" viewBox="0 0 90 84" stroke="#555" fill="none">
              <rect x="12.500" y="3" width="16" height="52" fill="#dcdcdc"/>
              <path d="M30 3.500h54M30 54.500h54M74 4v18M74 42v12M72 8l2-4 2 4M72 50l2 4 2-4"/>
              <path d="M13 58v20M28 58v20M5 71h7M30 71h23M9 69l3 2-3 2M31 69l-2 2 2 2"/>
            </svg>
            <span class="absolute left-[148px] top-[31px]">20 mm</span>
            <div class="absolute left-[143px] top-[67px] w-[26px] h-[20px] bg-white flex items-center pl-[1px] whitespace-nowrap">9 mm<span class="w-[1px] h-[11px] bg-black"></span></div>
            <span class="absolute left-[180px] top-[70px] text-[6px] text-[#888]">▸</span>
          </div>
          <div class="h-[17px] shrink-0 mt-[3px] bg-[#e9e9e9] flex items-center pl-[11px] gap-[5px] text-[10px]"><span class="text-[7px]">▶</span>Advanced Properties</div>
          <div class="flex items-center pl-[7px] mt-[7px] text-[9.500px]">
            <div class="w-[64px] h-[21px] border border-[#ccc] rounded-[2px] text-[#b5b5b5] flex items-center justify-center">OK</div>
            <div class="w-[64px] h-[21px] ml-[7px] border border-[#bbb] rounded-[2px] flex items-center justify-center">Cancel</div>
            <div class="w-[20px] h-[21px] ml-[53px] border border-[#ddd] rounded-[2px] text-[#ccc] text-[16px] flex items-center justify-center">+</div>
          </div>
        </div>
      </div>

      <!-- document tabs -->
      <div class="h-[20px] shrink-0 bg-[#e6e6e6] flex items-center">
        <svg class="ml-[4px]" width="14" height="14" viewBox="0 0 14 14"><path d="M0 7l7-6 7 6h-2v6H2V7z" fill="#f4f4f4" stroke="#555"/><path d="M5.500 9h3v4h-3z" fill="#777"/></svg>
        <div class="ml-[5px] w-[53px] h-full bg-[#ededed] border-b-[3px] border-[#4ba3c3] flex items-center pl-[7px] gap-[5px] pt-[1px] text-[#3d8eaa] text-[9.500px]">Part1<span class="text-[#555] text-[10px]">✕</span></div>
        <div class="w-[12px] ml-auto mr-[3px] flex flex-col gap-[2px]"><div class="h-[1px] bg-[#444]"></div><div class="h-[1px] bg-[#444]"></div><div class="h-[1px] bg-[#444]"></div></div>
      </div>
    </div>
  </div>

  <!-- status bar -->
  <div class="h-[18px] shrink-0 bg-[#f0f0f0] flex items-center text-[#444] relative">
    <span class="pt-[3px]">Add hole points or select a linear or circular edge to add a constraint</span>
    <span class="absolute left-[1235px] top-[3px]">1</span>
    <span class="absolute left-[1260px] top-[3px]">1</span>
  </div>
  <div class="h-[17px] shrink-0 bg-black"></div>
</div>
</body>
</html>
